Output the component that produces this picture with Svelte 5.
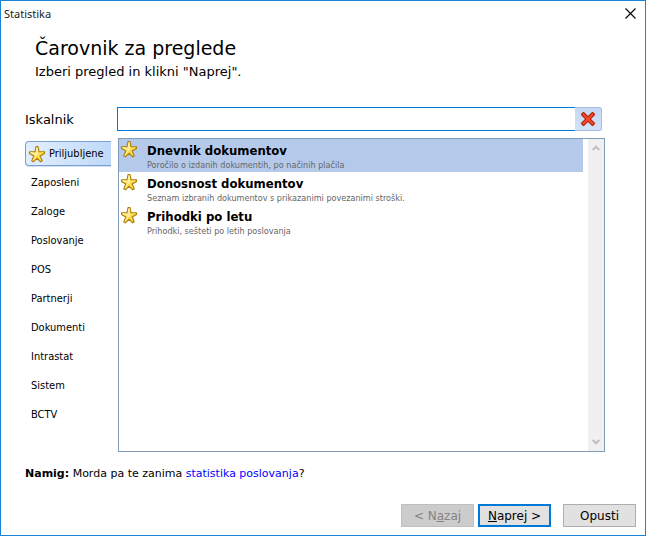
<script>
  const categories = [
    'Priljubljene', 'Zaposleni', 'Zaloge', 'Poslovanje', 'POS',
    'Partnerji', 'Dokumenti', 'Intrastat', 'Sistem', 'BCTV'
  ];
  const reports = [
    { title: 'Dnevnik dokumentov', text: 'Poročilo o izdanih dokumentih, po načinih plačila' },
    { title: 'Donosnost dokumentov', text: 'Seznam izbranih dokumentov s prikazanimi povezanimi stroški.' },
    { title: 'Prihodki po letu', text: 'Prihodki, sešteti po letih poslovanja' }
  ];

  let active = $state('Priljubljene');
  let selected = $state(0);
  let query = $state('');
</script>

{#snippet star()}
  <svg class="star" viewBox="0 0 18 18" aria-hidden="true">
    <defs>
      <linearGradient id="gold" x1="0" y1="0" x2="1" y2="1">
        <stop offset="0" stop-color="#fff8b8" />
        <stop offset=".5" stop-color="#fcdc50" />
        <stop offset="1" stop-color="#eeb400" />
      </linearGradient>
    </defs>
    <path d="M8 1.500h2l1 5.200h5.500v1.800l-4.300 2.400 2 4.800-1.500 1.200L9 13.400l-3.700 3.500-1.500-1.200 2-4.800L1.500 8.500V6.700H7z" fill="url(#gold)" stroke="#ac7e0c" stroke-width="1.100" stroke-linejoin="round" />
    <path d="M9 3v6.500L3 7.600M9 9.500l-3.800 5.700" fill="none" stroke="#fffbd0" stroke-width=".9" />
    <path d="M9 9.500l6-1.900M9 9.500l3.800 5.700" fill="none" stroke="#ffe978" stroke-width=".9" />
  </svg>
{/snippet}

<div class="window">
  <header class="titlebar">
    <span>Statistika</span>
    <button class="close" aria-label="Zapri">
      <svg viewBox="0 0 11 11" width="11" height="11"><path d="M.5.5l10 10M10.500.5l-10 10" stroke="#000" stroke-width="1.100" /></svg>
    </button>
  </header>

  <div class="intro">
    <h1>Čarovnik za preglede</h1>
    <p>Izberi pregled in klikni "Naprej".</p>
  </div>

  <div class="search">
    <label for="query">Iskalnik</label>
    <input id="query" type="text" bind:value={query} />
    <button class="clear" aria-label="Počisti" onclick={() => (query = '')}>
      <svg viewBox="0 0 14 14" width="14" height="14">
        <path d="M2.500 2.500l9 9M11.500 2.500l-9 9" stroke="#a61c08" stroke-width="4.200" stroke-linecap="square" stroke-linejoin="round" />
        <path d="M2.500 2.500l9 9M11.500 2.500l-9 9" stroke="#fb4a26" stroke-width="2.200" stroke-linecap="square" />
      </svg>
    </button>
  </div>

  <main>
    <nav>
      {#each categories as name}
        <button class="tab" class:active={active === name} onclick={() => (active = name)}>
          {#if name === 'Priljubljene'}{@render star()}{/if}
          <span>{name}</span>
        </button>
      {/each}
    </nav>
    <div class="list">
      <div class="reports">
        {#each reports as report, i}
          <button class="report" class:selected={selected === i} onclick={() => (selected = i)}>
            {@render star()}
            <span class="lines">
              <strong>{report.title}</strong>
              <small>{report.text}</small>
            </span>
          </button>
        {/each}
      </div>
      <div class="scrollbar" aria-hidden="true">
        <svg viewBox="0 0 8 6" width="8" height="6"><path d="M.7 5L4 1.700 7.300 5" /></svg>
        <svg viewBox="0 0 8 6" width="8" height="6"><path d="M.7 1L4 4.300 7.300 1" /></svg>
      </div>
    </div>
  </main>

  <p class="hint"><b>Namig:</b> Morda pa te zanima <a href="#poslovanje">statistika poslovanja</a>?</p>

  <footer>
    <button class="btn" disabled>&lt; N<u>a</u>zaj</button>
    <button class="btn primary"><u>N</u>aprej &gt;</button>
    <button class="btn cancel">Opusti</button>
  </footer>
</div>

<style>
  .window {
    display: flex;
    flex-direction: column;
    box-sizing: border-box;
    min-height: 100vh;
    border: 1px solid #1883d7;
    background: #fff;
    color: #000;
    font-family: Verdana, "DejaVu Sans", sans-serif;
    font-size: 11px;
  }
  button {
    padding: 0;
    border: 0;
    background: none;
    color: inherit;
    font: inherit;
  }
  h1, p {
    margin: 0;
    font-weight: 400;
  }
  .titlebar {
    display: flex;
    align-items: center;
    justify-content: space-between;
    height: 24px;
    padding: 0 9px 0 3px;
    font-family: "Segoe UI", "Noto Sans", "Open Sans", sans-serif;
    color: #222;
  }
  .close {
    display: flex;
  }
  .intro {
    padding: 10px 34px 0;
  }
  h1 {
    font-size: 19px;
    line-height: 26px;
  }
  .intro p {
    font-size: 13px;
    line-height: 22px;
  }
  .search {
    display: flex;
    align-items: center;
    height: 24px;
    margin: 24px 43px 7px 24px;
  }
  .search label {
    flex: 0 0 92px;
    font-size: 13px;
  }
  .search input {
    flex: 1;
    min-width: 0;
    height: 24px;
    box-sizing: border-box;
    padding: 0 4px;
    border: 1px solid #0078d7;
    border-right: 0;
    outline: 0;
    font: inherit;
  }
  .clear {
    display: flex;
    align-items: center;
    justify-content: center;
    box-sizing: border-box;
    width: 27px;
    height: 24px;
    border: 1px solid #a3bde3;
    border-left: 0;
    border-radius: 0 3px 3px 0;
    background: linear-gradient(#c6d8f2, #d3e2f7);
  }
  main {
    flex: 1;
    display: flex;
    margin: 0 40px 0 24px;
  }
  nav {
    flex: 0 0 93px;
    display: flex;
    flex-direction: column;
    align-items: flex-start;
    gap: 4px;
    padding-top: 3px;
    box-sizing: border-box;
  }
  .tab {
    display: flex;
    align-items: center;
    gap: 3px;
    box-sizing: border-box;
    width: 86px;
    height: 25px;
    padding-left: 6px;
    font-family: Tahoma, "DejaVu Sans Condensed", "DejaVu Sans", sans-serif;
  }
  .tab.active {
    padding-left: 2px;
    border: 1px solid #7a9fd0;
    border-right: 0;
    border-radius: 4px 0 0 4px;
    background: linear-gradient(90deg, #e2eefd, #bfd9fa);
    box-shadow: 0 1px #d0e2fa;
  }
  .star {
    flex: none;
    width: 18px;
    height: 18px;
  }
  .list {
    flex: 1;
    display: flex;
    min-width: 0;
    border: 1px solid #7f9db9;
  }
  .reports {
    flex: 1;
    min-width: 0;
    margin-right: 5px;
  }
  .report {
    display: flex;
    align-items: flex-start;
    gap: 9px;
    box-sizing: border-box;
    width: 100%;
    height: 33px;
    padding: 1px;
    text-align: left;
  }
  .report.selected {
    background: #b5caea;
  }
  .lines {
    display: flex;
    flex-direction: column;
    padding-top: 2px;
  }
  .lines strong {
    font-family: Tahoma, "DejaVu Sans Condensed", sans-serif;
    font-size: 13px;
    line-height: 18px;
  }
  .lines small {
    font-family: Tahoma, "DejaVu Sans Condensed", sans-serif;
    font-size: 9px;
    line-height: 10px;
    color: #666;
  }
  .scrollbar {
    display: flex;
    flex-direction: column;
    align-items: center;
    justify-content: space-between;
    box-sizing: border-box;
    width: 16px;
    padding: 6px 0;
    background: #f0f0f0;
  }
  .scrollbar path {
    fill: none;
    stroke: #bfbfbf;
    stroke-width: 2;
  }
  .hint {
    margin: 14px 24px 0;
    line-height: 16px;
  }
  .hint a {
    color: #00f;
    text-decoration: none;
  }
  footer {
    display: flex;
    justify-content: flex-end;
    padding: 22px 9px 8px;
  }
  .btn {
    box-sizing: border-box;
    width: 73px;
    height: 23px;
    margin-left: 4px;
    border: 1px solid #adadad;
    background: #e1e1e1;
    font-size: 12px;
  }
  .btn:disabled {
    border-color: #bfbfbf;
    background: #ccc;
    color: #838383;
  }
  .btn.primary {
    border: 2px solid #0078d7;
  }
  .btn.cancel {
    margin-left: 12px;
  }
</style>
